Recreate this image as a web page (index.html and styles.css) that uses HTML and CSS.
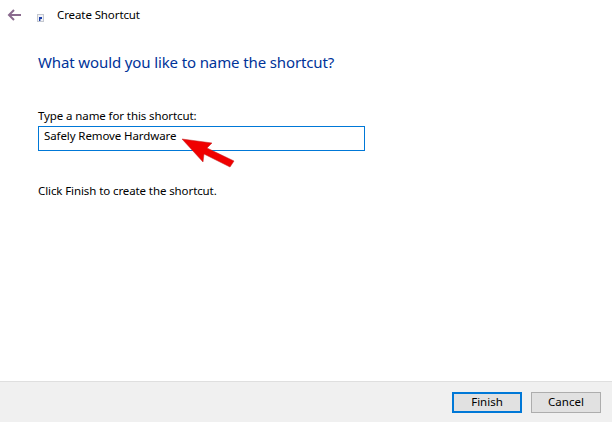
FILE: index.html
```html
<!DOCTYPE html>
<html lang="en">
<head>
    <meta charset="UTF-8">
    <title>Create Shortcut</title>
    <link rel="stylesheet" href="styles.css">
</head>
<body>
    <div class="wizard">
        <div class="title-bar">
            <svg class="back-icon" width="16" height="14" viewBox="0 0 16 14">
                <path d="M7 2 L2 7 L7 12 M2 7 H14" fill="none" stroke="#8a6a8e" stroke-width="2"/>
            </svg>
            <svg class="shortcut-icon" width="7" height="8" viewBox="0 0 7 8">
                <rect x="0.5" y="0.5" width="6" height="7" fill="#f2f2f6" stroke="#c4c8d0"/>
                <path d="M2 7 V3 H5 V5 H3.4 V7 Z" fill="#1b3fa8"/>
            </svg>
            <span class="title-text">Create Shortcut</span>
        </div>

        <div class="content">
            <h1>What would you like to name the shortcut?</h1>
            <label class="field-label">Type a name for this shortcut:</label>
            <div class="name-input">Safely Remove Hardware</div>
            <p class="hint">Click Finish to create the shortcut.</p>
        </div>

        <div class="footer">
            <button class="primary">Finish</button>
            <button>Cancel</button>
        </div>

        <svg class="red-arrow" width="64" height="40" viewBox="0 0 64 40">
            <path d="M2 9 L32 13 L27 18 L54 31 L50 37 L24 24 L23 32 Z" fill="#f00000" stroke="#c02020" stroke-width="0.5"/>
        </svg>
    </div>
</body>
</html>
```

FILE: styles.css
```css
body {
    margin: 0;
    background-color: #fff;
    color: #000;
    font-family: "Noto Sans", "Open Sans", sans-serif;
    font-size: 11.5px;
    letter-spacing: -0.1px;
}

.wizard {
    position: relative;
    display: flex;
    flex-direction: column;
    width: 612px;
    height: 422px;
    overflow: hidden;
}

.title-bar {
    display: flex;
    align-items: center;
    height: 30px;
    padding-left: 7px;
}

.back-icon {
    margin-top: -1px;
    margin-right: 14px;
}

.shortcut-icon {
    margin-top: 6px;
    margin-right: 13px;
}

.title-text {
    line-height: 16px;
}

.content {
    flex: 1;
    padding: 22px 0 0 38px;
}

.content h1 {
    margin: 0 0 36px;
    font-size: 15px;
    font-weight: normal;
    letter-spacing: -0.12px;
    line-height: 20px;
    color: #003399;
}

.field-label {
    display: block;
    height: 18px;
    line-height: 16px;
}

.name-input {
    box-sizing: border-box;
    width: 327px;
    height: 25px;
    padding-left: 5px;
    border: 1px solid #0078d7;
    line-height: 18px;
}

.hint {
    margin: 32px 0 0;
    line-height: 16px;
}

.footer {
    display: flex;
    justify-content: flex-end;
    gap: 9px;
    box-sizing: border-box;
    height: 41px;
    padding: 10px 11px 0 0;
    background-color: #f0f0f0;
    border-top: 1px solid #dfdfdf;
}

.footer button {
    box-sizing: border-box;
    width: 70px;
    height: 21px;
    padding: 0 0 2px;
    background-color: #e1e1e1;
    border: 1px solid #adadad;
    font-family: inherit;
    font-size: 11.5px;
    color: #000;
}

.footer button.primary {
    border: 2px solid #0078d7;
}

.red-arrow {
    position: absolute;
    left: 180px;
    top: 130px;
}
```
